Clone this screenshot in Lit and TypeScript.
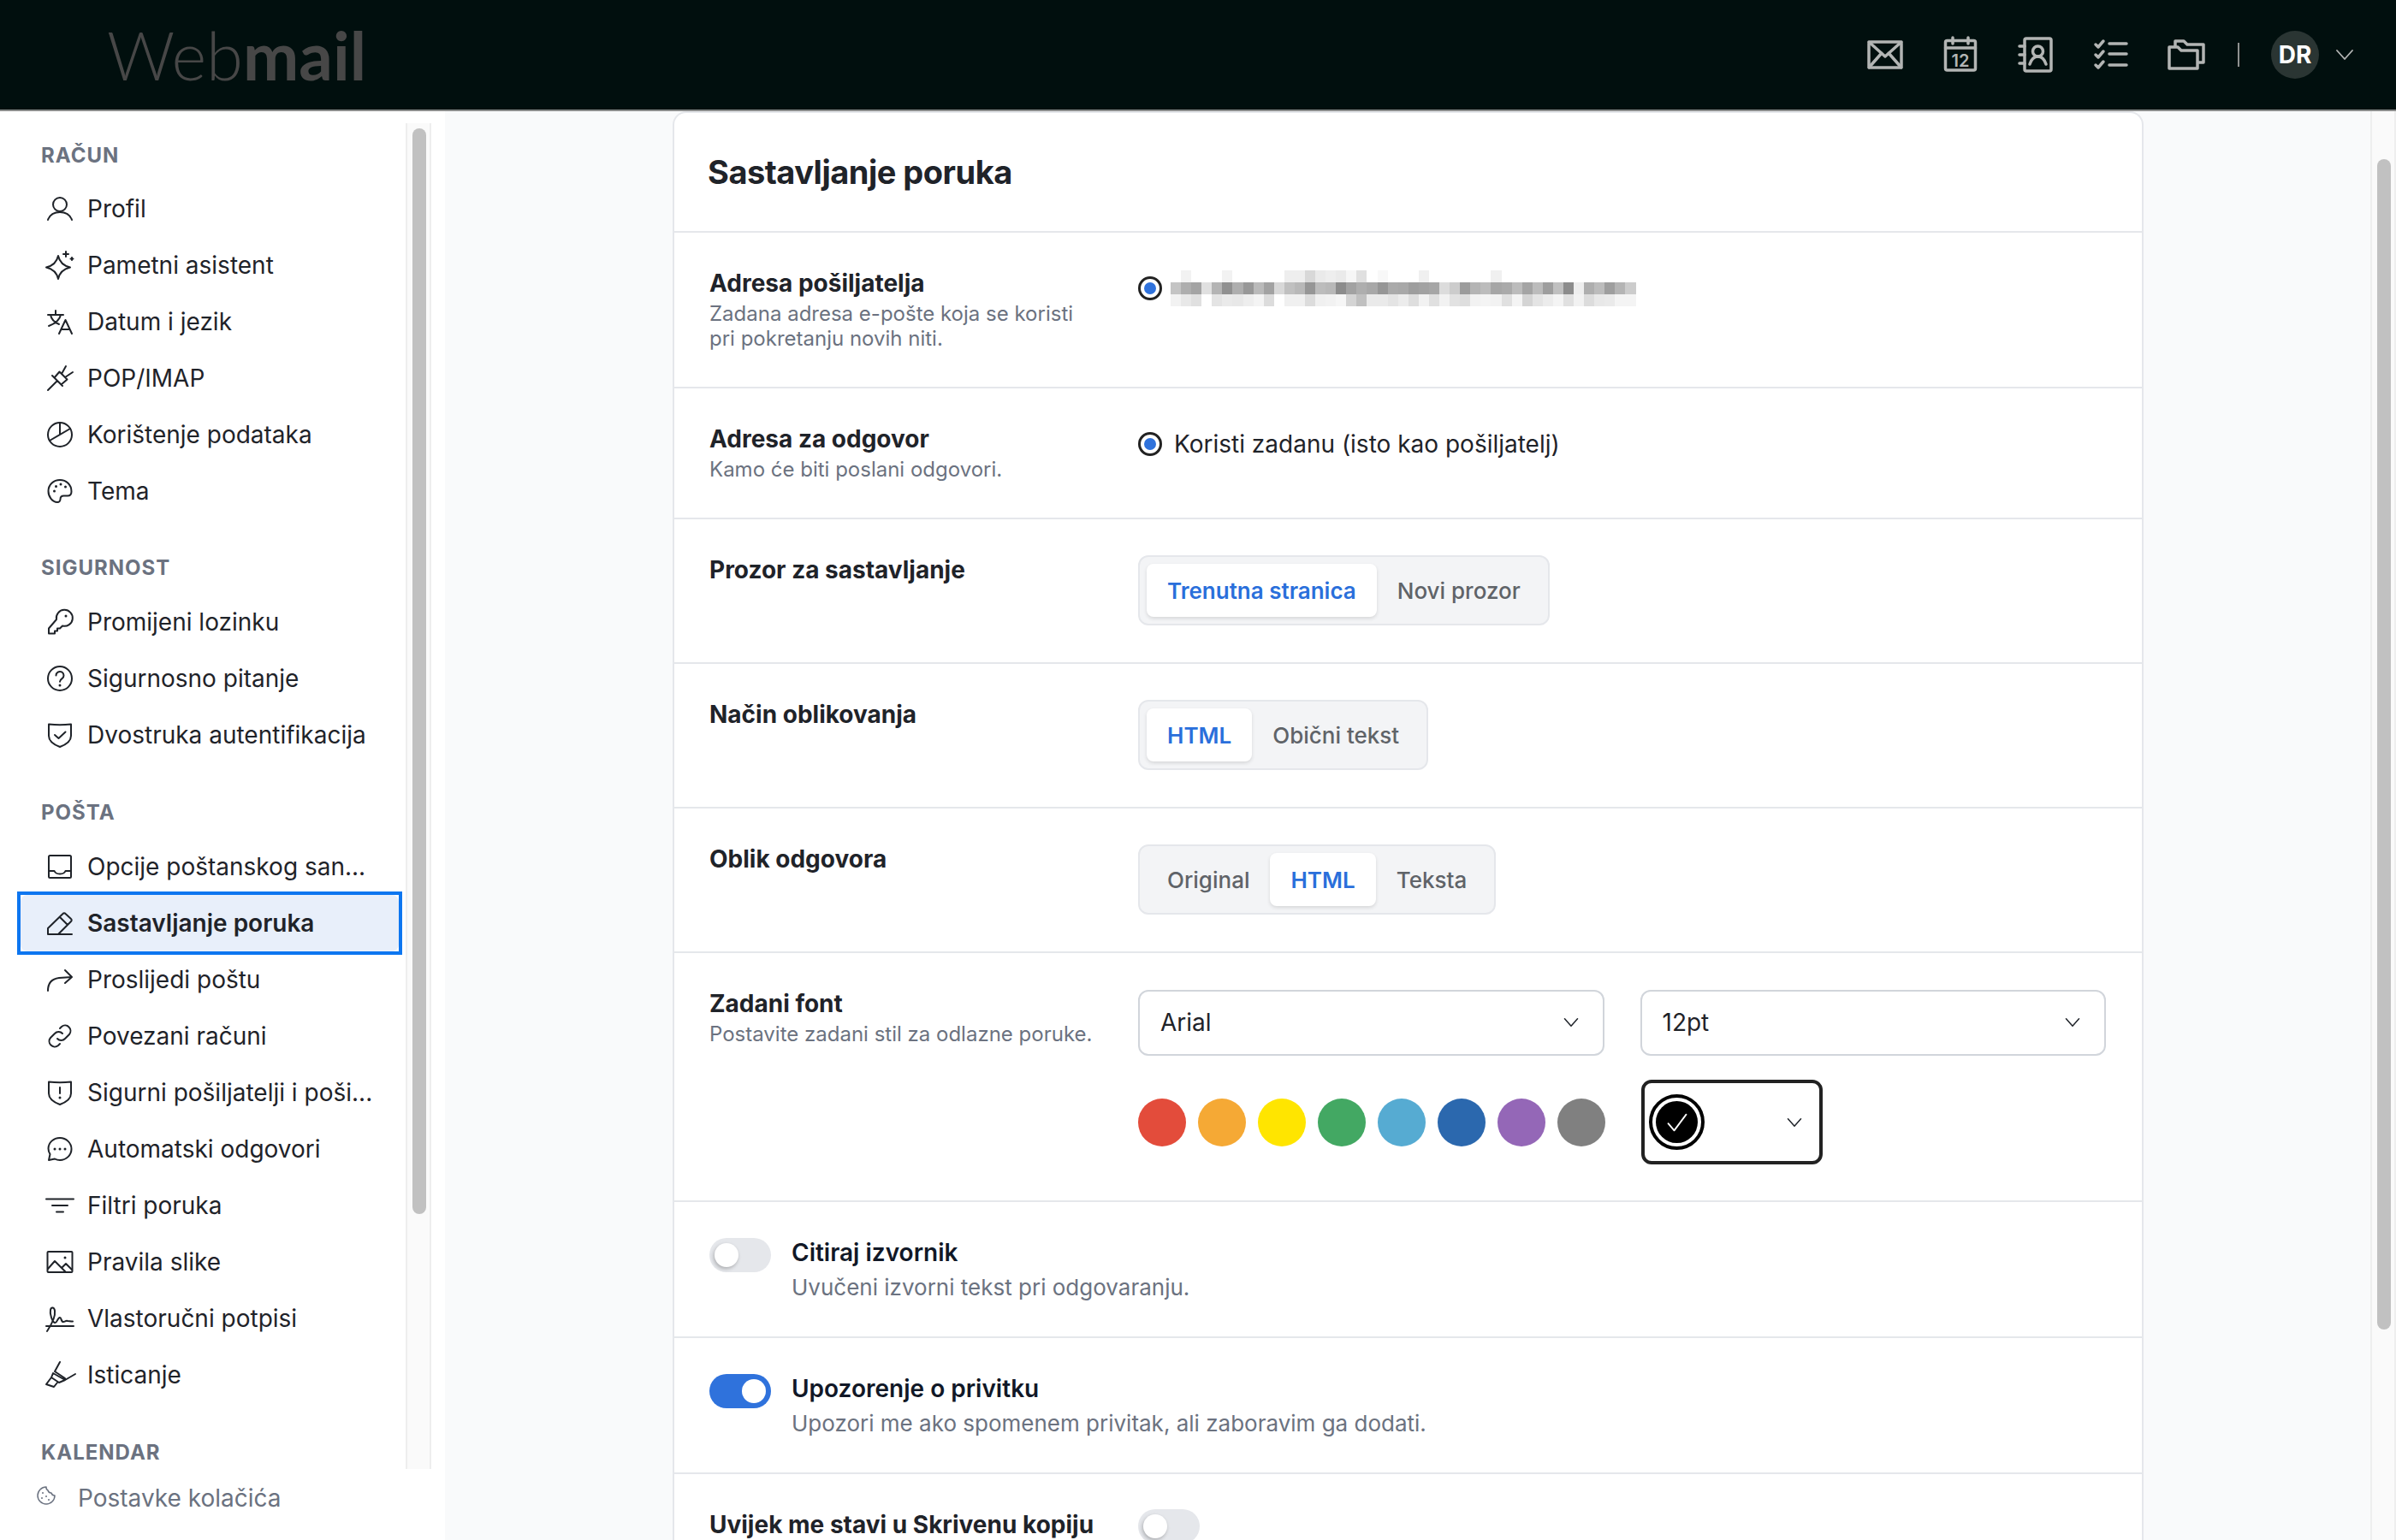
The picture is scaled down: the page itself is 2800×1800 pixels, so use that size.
import { LitElement, css, html, svg } from "lit";
import { customElement } from "lit/decorators.js";

const navIcons: Record<string, unknown> = {
  user: svg`<circle cx="16" cy="11" r="8"/><path d="M2 29c2-5.500 7-9 14-9s12 3.500 14 9"/>`,
  spark: svg`<path d="M14 5c1.500 7 5.500 11.500 14 13.500-8.500 2-12.500 6.500-14 13.500-1.500-7-5.500-11.500-14-13.500 8.500-2 12.500-6.500 14-13.500z"/><path d="M23 0v6M20 3h6M30 7v3M28.500 8.500h3"/>`,
  lang: svg`<path d="M2 8h18M11 3v5M17 8c-1 5-6 10-14 13M5 8c1 5 5 9 10 11M15 30l7.500-16L30 30M18 25h9"/>`,
  plug: svg`<path d="M13 19L2 30M7 13l12 12M9.500 15.500l6-7 9 9-7 6M18 11l5-9M22 15l9-6"/>`,
  pie: svg`<circle cx="16" cy="16" r="14"/><path d="M4 23l24-14M16 16V2"/>`,
  palette: svg`<path d="M16 3C8.500 3 2.500 8.500 2.500 16c0 6.500 4.500 13 10.500 13 2.500 0 3.500-2 3.500-3.500 0-2.500 1.500-4 4-4H25c3 0 4.500-2 4.500-5C29.500 8.500 23.500 3 16 3z"/><path stroke-width="3" d="M9.500 16v.01M11.500 10.500v.01M17 8v.01M22.500 11v.01"/>`,
  key: svg`<path d="M12 13a9.500 9.500 0 1 1 7 7.500l-3 3h-3v3h-3v3H3v-6z"/><path stroke-width="3" d="M23 9v.01"/>`,
  question: svg`<circle cx="16" cy="16" r="14"/><path d="M11.500 12.500a4.500 4.500 0 1 1 7 3.700c-1.500 1-2.500 1.800-2.500 3.600"/><path stroke-width="3" d="M16 24v.01"/>`,
  shieldCheck: svg`<path d="M3 3.500c8 1 18 1 26 0V17c0 6-5 10-13 13C8 27 3 23 3 17z"/><path d="M10 16l4.500 4 8-7.500"/>`,
  inbox: svg`<rect x="3" y="3" width="26" height="26" rx="1.500"/><path d="M3 21h6.500c1 2.500 3 3.500 6.500 3.500s5.500-1 6.500-3.500H29"/>`,
  pencil: svg`<path d="M2 29v-7L19.500 5a2 2 0 0 1 3 0L29 11a2 2 0 0 1 0 3L14 29zM16 9l9 9M14 29h16"/>`,
  forward: svg`<path d="M2 29c0-9 5-14 13-15l15-1M22 5l8 8-8 7"/>`,
  link: svg`<path d="M13 19a6 6 0 0 0 9 0l5-5a6.400 6.400 0 0 0-9-9l-2 2M19 13a6 6 0 0 0-9 0l-5 5a6.400 6.400 0 0 0 9 9l2-2"/>`,
  shieldWarn: svg`<path d="M3 3.500c8 1 18 1 26 0V17c0 6-5 10-13 13C8 27 3 23 3 17z"/><path d="M16 10v7"/><path stroke-width="3" d="M16 22v.01"/>`,
  chat: svg`<path d="M16 3C8.500 3 2.500 8.500 2.500 15.500c0 2.500.7 4.500 2 6.500L3 29l7-1.500c1.800 1 3.800 1.500 6 1.500 7.500 0 13.500-6 13.500-13S23.500 3 16 3z"/><path stroke-width="3" d="M10 16v.01M16 16v.01M22 16v.01"/>`,
  filter: svg`<path d="M0 8.500h32M7 16h18M12 23.500h8"/>`,
  image: svg`<rect x="1.500" y="4" width="29" height="24" rx="1"/><path d="M2 24l8-9 13 13M19 22l4-4 7 7"/><path stroke-width="3" d="M22 11v.01"/>`,
  sign: svg`<path d="M0 25h32M1 31c4-6 10-17 9-24-.5-4-4-5-5-1-1 5 2 14 5 15 3 1 3-6 6-6 2 0 1 5 4 5 2 0 3-2 5-1 2 0 3 .5 6 .5"/>`,
  marker: svg`<path d="M16 1l-6 11M8 14l14 8 12-7M10 12l12 8M8 14l-2 5 9 6 7-3M6 19l-6 8 9 3 4-5"/>`,
};

const navSections = [
  {
    title: "RAČUN",
    items: [
      ["user", "Profil"],
      ["spark", "Pametni asistent"],
      ["lang", "Datum i jezik"],
      ["plug", "POP/IMAP"],
      ["pie", "Korištenje podataka"],
      ["palette", "Tema"],
    ],
  },
  {
    title: "SIGURNOST",
    items: [
      ["key", "Promijeni lozinku"],
      ["question", "Sigurnosno pitanje"],
      ["shieldCheck", "Dvostruka autentifikacija"],
    ],
  },
  {
    title: "POŠTA",
    items: [
      ["inbox", "Opcije poštanskog san..."],
      ["pencil", "Sastavljanje poruka"],
      ["forward", "Proslijedi poštu"],
      ["link", "Povezani računi"],
      ["shieldWarn", "Sigurni pošiljatelji i poši..."],
      ["chat", "Automatski odgovori"],
      ["filter", "Filtri poruka"],
      ["image", "Pravila slike"],
      ["sign", "Vlastoručni potpisi"],
      ["marker", "Isticanje"],
    ],
  },
  { title: "KALENDAR", items: [] },
];

// blurred address, one grey level per mosaic cell
const mosaic = [
  "ff f2 ff ff ff f2 ff ff ff ff ff ee ee d8 ea ee ea f6 e0 ff f8 ff ff ff f0 ff ff ff ff ff ff f0 ff ff ff ff ff ff ff ff ff ff ff ff ff",
  "c4 ae a4 e0 b4 90 ae 98 ba a2 d8 c0 b8 96 bc b8 8c a2 ae a8 96 aa a8 9e a2 a6 dc cc 9c b4 bc a6 aa bc a4 bc 9e c0 8c ee ae bc 9e b4 cc",
  "f2 e8 e0 ff e4 ea e8 ee f4 dc ff f0 f0 dc f0 f2 f6 d4 c0 ea ea e4 ec de f2 e0 f2 e2 de f2 f4 f2 e0 f4 d4 e4 ec f4 e0 f2 dc e8 ea f4 f4",
];

const swatches = ["#e34c3b", "#f5a935", "#ffe500", "#43a863", "#56abd2", "#2b68ae", "#9467b7", "#808080"];

const chevron = html`<svg class="chev" viewBox="0 0 20 12"><path d="M1 1l9 10 9-10"/></svg>`;

@customElement("app-root")
export class AppRoot extends LitElement {
  static styles = css`
    :host {
      display: block;
      width: 2800px;
      height: 1800px;
      overflow: hidden;
      font-family: Inter, "Noto Sans", sans-serif;
      font-size: 28px;
      color: #1f2329;
      background: #fff;
    }
    * { box-sizing: border-box; }
    svg { display: block; fill: none; stroke: currentColor; stroke-linecap: round; stroke-linejoin: round; }

    .topbar {
      height: 130px;
      background: #010f0e;
      border-bottom: 2px solid #8a8c8b;
      display: flex;
      align-items: center;
      justify-content: space-between;
      padding: 0 50px 0 125px;
      color: #b3b5b4;
    }
    .logo { font-family: Lato, sans-serif; font-size: 78px; line-height: 1; color: #474747; font-weight: 300; }
    .logo b { font-weight: 700; }
    .tools { display: flex; align-items: center; }
    .apps { display: flex; gap: 44px; }
    .tool { width: 44px; height: 44px; stroke-width: 3.500; }
    .tool text { font-family: Inter, sans-serif; font-size: 20px; font-weight: 600; fill: currentColor; stroke: none; }
    .sep { width: 2px; height: 28px; background: #8f9190; margin: 0 37px 0 38px; }
    .avatar {
      width: 56px;
      height: 56px;
      border-radius: 50%;
      background: #2a3533;
      color: #fff;
      font-weight: 700;
      font-size: 28px;
      display: flex;
      align-items: center;
      justify-content: center;
      margin-right: 20px;
    }
    .chev { width: 20px; height: 12px; stroke-width: 1.800; }

    .body { display: flex; height: 1670px; }
    .sidebar { width: 520px; display: flex; flex-direction: column; background: #fff; }
    .side-top { flex: 1; display: flex; min-height: 0; }
    .nav { width: 474px; overflow: hidden; padding: 36px 0 0 24px; }
    .section { width: 442px; margin-bottom: 42px; }
    .section:first-child { margin-bottom: 41px; }
    .section h3 {
      margin: 0 0 14px 24px;
      font-size: 24px;
      line-height: 32px;
      font-weight: 700;
      letter-spacing: 1px;
      color: #6b7280;
    }
    .section:first-child h3 { margin-bottom: 13px; }
    .item {
      position: relative;
      isolation: isolate;
      height: 66px;
      display: flex;
      align-items: center;
      gap: 16px;
      padding-left: 30px;
      white-space: nowrap;
      color: #1f2329;
    }
    .item svg { width: 32px; height: 32px; stroke-width: 2; overflow: visible; flex: none; }
    .item.active { outline: 4px solid #0d76f0; font-weight: 600; }
    .item.active::before {
      content: "";
      position: absolute;
      inset: 0;
      z-index: -1;
      background: #e8effa;
      border-radius: 8px;
    }
    .rail {
      width: 30px;
      margin-top: 14px;
      background: #fafafa;
      border-left: 2px solid #eeeeee;
      border-right: 2px solid #eeeeee;
      padding: 6px 6px 0;
    }
    .thumb { width: 16px; background: #c1c1c1; border-radius: 8px; }
    .nav-thumb { height: 1269px; }
    .foot {
      height: 83px;
      display: flex;
      align-items: center;
      padding: 0 0 15px 43px;
      gap: 26px;
      color: #6b7280;
    }
    .foot svg { width: 22px; height: 22px; stroke-width: 1.500; margin-top: -6px; }

    .main { flex: 1; min-width: 0; background: #f9fafb; overflow: hidden; padding-left: 266px; }
    .card {
      width: 1719px;
      background: #fff;
      border: 2px solid #e5e7eb;
      border-bottom: 0;
      border-radius: 16px 16px 0 0;
    }
    .card-head { height: 140px; display: flex; align-items: center; padding: 0 0 1px 39px; border-bottom: 2px solid #e5e7eb; }
    .card-head h2 { margin: 0; font-size: 38px; font-weight: 700; letter-spacing: -0.500px; color: #1f2329; }
    .row {
      display: grid;
      grid-template-columns: 501px 1fr;
      padding: 41px 42px 42px 41px;
      border-bottom: 2px solid #e5e7eb;
    }
    .row.seg-row { padding-bottom: 43px; }
    .label { line-height: 36px; font-weight: 700; }
    .desc { font-size: 24px; line-height: 29px; margin-top: 3px; color: #6b7280; }
    .choice { display: flex; align-items: center; align-self: start; }
    .sender { margin-top: 3px; gap: 10px; }
    .reply { margin-top: 6px; gap: 14px; line-height: 36px; }
    .radio {
      width: 28px;
      height: 28px;
      border-radius: 50%;
      border: 3px solid #222;
      display: flex;
      align-items: center;
      justify-content: center;
      flex: none;
    }
    .radio i { width: 14px; height: 14px; border-radius: 50%; background: #2f72dc; }
    .mosaic { display: grid; grid-template-columns: repeat(45, 12.090px); grid-auto-rows: 14px; }

    .seg {
      display: inline-flex;
      margin-top: 1px;
      height: 82px;
      padding: 8px;
      background: #f3f4f6;
      border: 2px solid #e5e7eb;
      border-radius: 12px;
    }
    .seg span {
      display: flex;
      align-items: center;
      padding: 0 24px;
      font-size: 26px;
      font-weight: 500;
      color: #5f6368;
      border-radius: 8px;
    }
    .seg span.on { background: #fff; color: #2a6fdb; font-weight: 600; box-shadow: 0 2px 4px rgba(0, 0, 0, 0.12); }

    .font-col { margin-top: 2px; display: flex; flex-direction: column; gap: 28px; }
    .font-line { display: flex; gap: 42px; align-items: center; }
    .select {
      flex: 1;
      height: 77px;
      border: 2px solid #d1d5db;
      border-radius: 12px;
      display: flex;
      align-items: center;
      justify-content: space-between;
      padding: 0 28px 1px 24px;
    }
    .select .chev { width: 18px; height: 10px; }
    .swatches { flex: 1; display: flex; gap: 14px; }
    .swatches i { width: 56px; height: 56px; border-radius: 50%; flex: none; }
    .colour-pick {
      width: 212px;
      height: 99px;
      margin-right: 331px;
      border: 4px solid #222;
      border-radius: 12px;
      display: flex;
      align-items: center;
      justify-content: space-between;
      padding: 0 20px 0 5px;
    }
    .colour-pick .chev { width: 18px; height: 10px; }
    .ring { width: 65px; height: 65px; border-radius: 50%; border: 4px solid #000; padding: 4px; }
    .disc { width: 100%; height: 100%; border-radius: 50%; background: #000; color: #fff; display: flex; align-items: center; justify-content: center; }
    .disc svg { width: 28px; height: 28px; stroke-width: 1.600; }

    .toggle-row { display: flex; gap: 24px; padding: 42px 42px 37px 41px; border-bottom: 2px solid #e5e7eb; }
    .toggle {
      width: 72px;
      height: 40px;
      border-radius: 20px;
      background: #e5e7eb;
      padding: 6px;
      flex: none;
      display: flex;
    }
    .toggle i { width: 28px; height: 28px; border-radius: 50%; background: #fff; box-shadow: -1px 2px 4px rgba(0, 0, 0, 0.25); }
    .toggle.on { background: #2f72dc; justify-content: flex-end; }
    .toggle.on i { box-shadow: none; }
    .t-title { line-height: 35px; font-weight: 600; color: #111827; }
    .t-desc { font-size: 26px; line-height: 40px; margin-top: 3px; color: #6b7280; }

    .page-rail {
      width: 30px;
      background: #fafafa;
      border-left: 2px solid #eeeeee;
      border-right: 2px solid #eeeeee;
      padding: 56px 6px 0;
    }
    .page-thumb { height: 1368px; }
  `;

  private segmented(options: string[], active: string) {
    return html`<div>
      <div class="seg">
        ${options.map((o) => html`<span class=${o === active ? "on" : ""}>${o}</span>`)}
      </div>
    </div>`;
  }

  private renderTopbar() {
    return html`<header class="topbar">
      <div class="logo">Web<b>mail</b></div>
      <div class="tools">
        <div class="apps">
          <svg class="tool" viewBox="0 0 44 44"><rect x="3" y="7" width="38" height="30" rx="2"/><path d="M3 7l19 17L41 7M3 37l15-17M41 37L26 20"/></svg>
          <svg class="tool" viewBox="0 0 44 44"><rect x="4.500" y="5.500" width="35" height="34.500" rx="2"/><path d="M4.500 14h35M13 2v7M31 2v7"/><text x="22" y="35.500" text-anchor="middle">12</text></svg>
          <svg class="tool" viewBox="0 0 44 44"><rect x="9" y="3" width="31" height="38" rx="2"/><path d="M3 12h6M3 22h6M3 32h6"/><circle cx="24.500" cy="18" r="6"/><path d="M15 33c2-6 5-9 9.500-9s7.500 3 9.500 9"/></svg>
          <svg class="tool" viewBox="0 0 44 44"><path d="M4 10l3 3 6-7M4 22l3 3 6-7M4 34l3 3 6-7M20 9h20M20 21h20M20 34h20"/></svg>
          <svg class="tool" viewBox="0 0 44 44"><path d="M2 38V13h10l4 4h19v21zM9 13V6h10l4 4h19v21h-7"/></svg>
        </div>
        <div class="sep"></div>
        <div class="avatar">DR</div>
        ${chevron}
      </div>
    </header>`;
  }

  private renderSidebar() {
    return html`<aside class="sidebar">
      <div class="side-top">
        <nav class="nav">
          ${navSections.map(
            (s) => html`<div class="section">
              <h3>${s.title}</h3>
              ${s.items.map(
                ([icon, label]) => html`<div class="item ${label === "Sastavljanje poruka" ? "active" : ""}">
                  <svg viewBox="0 0 32 32">${navIcons[icon]}</svg>${label}
                </div>`,
              )}
            </div>`,
          )}
        </nav>
        <div class="rail"><div class="thumb nav-thumb"></div></div>
      </div>
      <div class="foot">
        <svg viewBox="0 0 22 22"><path d="M11 1a10 10 0 1 0 10 10 4 4 0 0 1-4-3 4 4 0 0 1-4-3 4 4 0 0 1-2-4z"/><path stroke-width="2" d="M7 8v.01M6 14v.01M11 12v.01M14 16v.01"/></svg>
        Postavke kolačića
      </div>
    </aside>`;
  }

  private renderCard() {
    return html`<section class="card">
      <div class="card-head"><h2>Sastavljanje poruka</h2></div>

      <div class="row">
        <div>
          <div class="label">Adresa pošiljatelja</div>
          <div class="desc">Zadana adresa e-pošte koja se koristi<br />pri pokretanju novih niti.</div>
        </div>
        <div class="choice sender">
          <span class="radio"><i></i></span>
          <div class="mosaic">
            ${mosaic.map((line) =>
              line.split(" ").map((g) => html`<span style="background:#${g}${g}${g}"></span>`),
            )}
          </div>
        </div>
      </div>

      <div class="row">
        <div>
          <div class="label">Adresa za odgovor</div>
          <div class="desc">Kamo će biti poslani odgovori.</div>
        </div>
        <div class="choice reply"><span class="radio"><i></i></span>Koristi zadanu (isto kao pošiljatelj)</div>
      </div>

      <div class="row seg-row">
        <div class="label">Prozor za sastavljanje</div>
        ${this.segmented(["Trenutna stranica", "Novi prozor"], "Trenutna stranica")}
      </div>
      <div class="row seg-row">
        <div class="label">Način oblikovanja</div>
        ${this.segmented(["HTML", "Obični tekst"], "HTML")}
      </div>
      <div class="row seg-row">
        <div class="label">Oblik odgovora</div>
        ${this.segmented(["Original", "HTML", "Teksta"], "HTML")}
      </div>

      <div class="row">
        <div>
          <div class="label">Zadani font</div>
          <div class="desc">Postavite zadani stil za odlazne poruke.</div>
        </div>
        <div class="font-col">
          <div class="font-line">
            <div class="select">Arial ${chevron}</div>
            <div class="select">12pt ${chevron}</div>
          </div>
          <div class="font-line">
            <div class="swatches">
              ${swatches.map((c) => html`<i style="background:${c}"></i>`)}
            </div>
            <div class="colour-pick">
              <div class="ring"><div class="disc"><svg viewBox="0 0 24 24"><path d="M3 13l6 7L21 4"/></svg></div></div>
              ${chevron}
            </div>
          </div>
        </div>
      </div>

      <div class="toggle-row">
        <div class="toggle"><i></i></div>
        <div>
          <div class="t-title">Citiraj izvornik</div>
          <div class="t-desc">Uvučeni izvorni tekst pri odgovaranju.</div>
        </div>
      </div>
      <div class="toggle-row">
        <div class="toggle on"><i></i></div>
        <div>
          <div class="t-title">Upozorenje o privitku</div>
          <div class="t-desc">Upozori me ako spomenem privitak, ali zaboravim ga dodati.</div>
        </div>
      </div>
      <div class="row">
        <div class="label">Uvijek me stavi u Skrivenu kopiju</div>
        <div class="toggle"><i></i></div>
      </div>
    </section>`;
  }

  render() {
    return html`
      ${this.renderTopbar()}
      <div class="body">
        ${this.renderSidebar()}
        <main class="main">${this.renderCard()}</main>
        <div class="page-rail"><div class="thumb page-thumb"></div></div>
      </div>
    `;
  }
}
